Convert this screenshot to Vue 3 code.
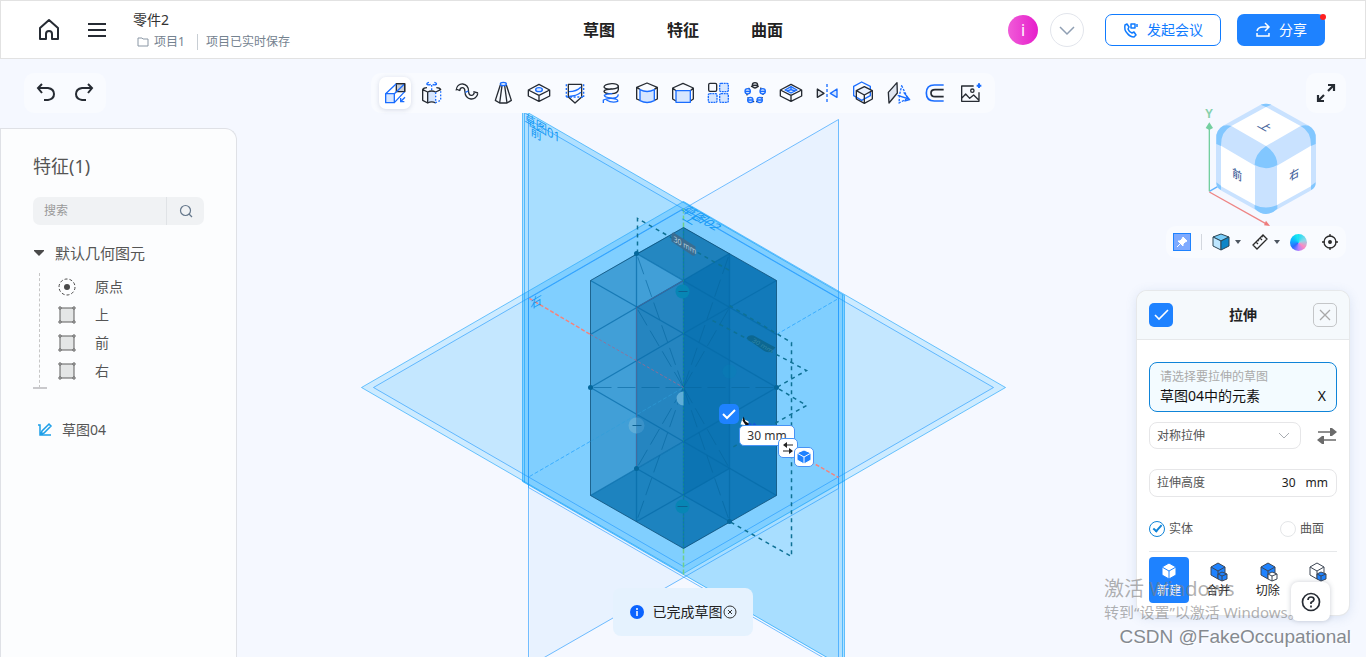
<script setup>
import { ref } from 'vue'

const tabs = ['草图', '特征', '曲面']

// toolbar glyphs, drawn on a 72x72 grid; .b = accent stroke, .f = accent fill
const tools = [
  { name: '拉伸', icon: '<path d="M40 8H65V32H40Z" fill="#c9ced6"/><path class="b f" d="M8 38H34V65H8Z"/><path class="b" d="M8 38L40 8M34 38L65 8M34 65L65 32"/><path d="M40 8H65V32"/><path class="b" d="M66 49L54 61M53 51V62H64"/>' },
  { name: '旋转', icon: '<path class="f n" d="M26 33Q38 27 50 33V66Q38 58 26 66Z"/><path d="M24 20Q14 20 11 26V58L26 66V33L11 26M52 20Q62 20 65 26L50 33Q38 27 26 33M26 66Q38 59 50 66"/><path class="b" stroke-dasharray="5 5" d="M50 34V65L65 58V28M38 12V28"/><path class="b" d="M30 4Q22 6 24 10Q30 13 35 10M46 4Q54 6 52 10Q46 13 41 10"/>' },
  { name: '扫描', icon: '<path stroke-width="15" d="M9 29C10 8 36 10 35 30C36 54 60 54 63 36"/><path stroke="#f9fbff" stroke-width="7" d="M8 31C10 8 36 10 35 30C36 54 60 54 64 34"/><path d="M3 24L15 29M55 32L69 36"/><path class="b" d="M31 34L40 30"/>' },
  { name: '放样', icon: '<path d="M28 12L13 58L26 66H48L61 58L46 12M33 14L26 66M41 14L48 66"/><path class="b f" d="M37 4Q46 4 46 9Q46 14 37 14Q28 14 28 9Q28 4 37 4Z"/>' },
  { name: '孔', icon: '<path d="M36 10L68 27L36 43L4 27ZM4 27V45L36 61L68 45V27M36 43V61"/><ellipse class="b f" cx="36" cy="26" rx="10" ry="6"/>' },
  { name: '螺纹', icon: '<path d="M16 10H56V48L36 66L16 48Z"/><path class="b" d="M18 32Q40 32 54 18M18 46Q40 46 54 34"/><path class="b" stroke-dasharray="6 5" d="M10 10V48M62 10V48M10 48H62"/>' },
  { name: '弹簧', icon: '<path d="M58 15Q54 7 38 8Q16 10 15 18Q18 26 40 24Q58 22 58 14V26Q56 38 38 38Q16 38 15 31Q18 24 38 24"/><path class="b" d="M58 40Q56 53 36 51Q16 49 16 43Q24 37 40 38M13 66V57Q30 49 50 54Q58 57 56 61Q40 67 22 57"/>' },
  { name: '圆角', icon: '<path class="f n" d="M15 26Q36 37 58 26V58Q36 70 15 58Z"/><path d="M15 58L5 54V19L36 6L67 19V54L58 58M5 19L15 25M67 19L58 25"/><path class="b" d="M15 26Q36 37 58 26V59Q36 70 15 59Z"/>' },
  { name: '倒角', icon: '<path d="M15 60L5 54V21L36 7L67 21V54L58 60M5 21L15 29M67 21L58 29"/><path class="b f" d="M15 29H58V64H15Z"/>' },
  { name: '线性阵列', icon: '<rect x="5" y="7" width="24" height="24" rx="4"/><g class="b f" stroke-dasharray="6 2"><rect x="38" y="7" width="26" height="25" rx="4"/><rect x="4" y="38" width="26" height="26" rx="4"/><rect x="38" y="38" width="26" height="26" rx="4"/></g>' },
  { name: '圆周阵列', icon: '<circle cx="36" cy="38" r="24" stroke-dasharray="4 6"/><circle cx="36" cy="13" r="8" fill="#dce0e6"/><g class="b f"><circle cx="14" cy="31" r="8"/><circle cx="59" cy="31" r="8"/><circle cx="22" cy="57" r="8"/><circle cx="50" cy="57" r="8"/></g><path d="M28 13H44"/><path class="b" d="M6 31H22M51 31H67M14 57H30M42 57H58"/>' },
  { name: '抽壳', icon: '<path d="M36 10L68 27L36 43L4 27ZM4 27V45L36 61L68 45V27M36 43V61"/><path class="b f" d="M36 17L54 27L36 36L18 27Z"/><path class="b" d="M36 17V26L24 30M36 26L48 30"/>' },
  { name: '镜像', icon: '<path d="M7 24V49L27 37Z" fill="#dce0e6"/><path class="b f" d="M66 24V49L46 37Z"/><path class="b" stroke-dasharray="9 6" d="M36 9V64"/>' },
  { name: '布尔', icon: '<path class="b" d="M32 3L58 16V44L32 58L8 44V16Z"/><path fill="#e9f1ff" d="M40 17L64 29L40 42L16 29Z"/><path d="M16 29V54L40 67L64 54V29M40 42V67"/>' },
  { name: '分割', icon: '<path fill="#e0e6f0" d="M30 5L4 34L6 66L31 36Z"/><path class="b" stroke-dasharray="7 4" d="M44 14L62 52L36 66L38 40Z"/><path class="b" d="M32 43L66 54M50 34L68 56L52 60"/>' },
  { name: '偏移', icon: '<path class="b" stroke-width="5" d="M62 12H34Q10 12 10 36Q10 60 34 60H62"/><path stroke-width="5" d="M62 26H36Q24 26 24 36Q24 47 36 47H62"/>' },
  { name: '贴图', icon: '<path d="M44 15H8V61H60V34M8 52L20 39L32 52L44 42L60 58"/><circle cx="40" cy="29" r="5"/><path class="b" stroke-width="6" d="M60 7V21M53 14H67"/>' },
]
const activeTool = ref('拉伸')

const planes = ['上', '前', '右']
const search = ref('')
const mode = ref('对称拉伸')
const height = ref('30')
const bodyType = ref('solid')

const operations = [
  { name: '新建', big: '#fff', small: '', active: true },
  { name: '合并', big: '#1e82ff', small: '#1e82ff' },
  { name: '切除', big: '#1e82ff', small: '#fff' },
  { name: '相交', big: '#fff', small: '#1e82ff' },
]

// edges of the extruded body
const edges = [
  'M590 280L683 333L776 280', 'M683 280L636 307', 'M636 253L776 334', 'M729 253L590 334',
  'M590 387L683 333L776 387L683 441L590 387', 'M590 495L683 441L776 495',
  'M636 468L729 521M729 468L636 521', 'M636 253V521M683 227V548M729 253V521',
]
const rays = [[636, 253], [636, 307], [729, 253], [729, 307], [590, 387], [776, 387], [636, 468], [636, 521], [729, 468], [729, 521]]
</script>

<template>
  <div class="app">
    <header class="topbar">
      <div class="top-left">
        <button class="icon-btn" aria-label="主页">
          <svg width="24" height="24" viewBox="0 0 24 24" fill="none" stroke="#262b33" stroke-width="2" stroke-linejoin="round"><path d="M3 10L12 2L21 10V21H15V16Q15 13 12 13Q9 13 9 16V21H3Z" /></svg>
        </button>
        <button class="icon-btn" aria-label="菜单">
          <svg width="24" height="24" viewBox="0 0 24 24" stroke="#262b33" stroke-width="2"><path d="M3 6H21M3 12H21M3 18H21" /></svg>
        </button>
        <div class="doc">
          <div class="doc-name">零件2</div>
          <div class="doc-sub">
            <svg width="12" height="12" viewBox="0 0 12 12" fill="none" stroke="#8a97a5"><path d="M1 10V2H5L6 3H11V10Z" /></svg>
            <span>项目1</span>
            <span class="saved">项目已实时保存</span>
          </div>
        </div>
      </div>
      <nav class="tabs">
        <a v-for="t in tabs" :key="t" href="#">{{ t }}</a>
      </nav>
      <div class="top-right">
        <span class="avatar">i</span>
        <button class="round" aria-label="更多">
          <svg width="18" height="18" viewBox="0 0 18 18" fill="none" stroke="#8f9fb3" stroke-width="1.5"><path d="M2 6L9 13L16 6" /></svg>
        </button>
        <button class="btn outline">
          <svg width="16" height="16" viewBox="0 0 16 16" fill="none" stroke="#0f7bff" stroke-width="1.5" stroke-linejoin="round"><path d="M2 3L4 2L6 5L5 7Q6 10 9 11L11 10L13 13L11 15Q7 15 4 11Q1 8 2 3Z" /><path d="M8 2H12V6H8ZM14 2V5" /></svg>
          发起会议
        </button>
        <button class="btn primary">
          <svg width="16" height="16" viewBox="0 0 16 16" fill="none" stroke="#fff" stroke-width="1.5"><path d="M2 11V14H14V11M2 9Q3 5 8 5H13M10 1L14 5L10 9" /></svg>
          分享
          <i class="dot"></i>
        </button>
      </div>
    </header>

    <main class="workspace">
      <div class="scene">
        <svg class="canvas" width="100%" height="100%">
          <svg x="50%" overflow="visible">
            <g transform="translate(-682.5 -58.5)" fill="none">
              <path fill="#e8f2ff" d="M838 119V488L529 666V298Z" />
              <path fill="#b0e0ff" d="M522 109L844 295V667L522 481Z" />
              <path fill="#a8deff" d="M529 119L838 298V664L529 485Z" />
              <path fill="#cdebff" d="M361 387L683 201L1005 387L683 573Z" />
              <path fill="#c4e7ff" d="M373 387L683 208L993 387L683 566Z" />
              <path fill="#80cfff" d="M522 294L683 201L844 295V481L683 573L522 481Z" />
              <g stroke="#1a96ff" stroke-opacity=".6">
                <path d="M838 119V488L528 666V298Z" />
                <path d="M528 119L838 298V666L528 487Z" />
                <path d="M373 387L683 208L993 387L683 566Z" />
              </g>
              <g stroke="#12a0fb" stroke-opacity=".6">
                <path d="M361 387L683 201L1005 387L683 573Z" />
                <path d="M522 109L844 295V667L522 481ZM524 110V482M842 294V666" />
              </g>
              <path stroke="#3aaeff" stroke-dasharray="4 2" d="M529 476L683 387M776 334L838 298" />
              <path stroke="#f4837d" stroke-width="1.5" stroke-dasharray="4 2" d="M529 298L590 334M810 461L838 477" />
              <path stroke="#6fd08c" stroke-width="1.5" stroke-dasharray="5 2" d="M683 208V227M683 548V576" />

              <g class="plane-label">
                <text transform="matrix(.866 .5 0 1 524 122)">草图01</text>
                <text transform="matrix(.866 .5 0 1 530 134)">前</text>
                <text transform="matrix(.866 .5 -.866 .5 679 210)">草图02</text>
                <text transform="matrix(.866 .5 -.866 .5 681 218)">上</text>
                <text transform="matrix(.866 -.5 0 1 530 309)">右</text>
              </g>

              <g class="body">
                <path fill="#419fd7" d="M590 280L636 253L683 280V441L590 495Z" />
                <path fill="#2487c1" d="M636 253L683 227V280Z" />
                <path fill="#2585c0" d="M636 307L683 280V441L636 468Z" />
                <path fill="#1d83bf" d="M590 495L683 441V548Z" />
                <path fill="#127aba" d="M683 227L776 280V495L683 548Z" />
                <path fill="#1d80bb" d="M683 227L729 253L683 280Z" />
                <path fill="#0c74b3" d="M683 280L729 253V468L683 495Z" />
                <path fill="#187fbd" d="M683 495L729 521L683 548Z" />
                <path v-for="e in edges" :key="e" :d="e" stroke="#066ba8" stroke-opacity=".7" stroke-width="1.3" />
                <path v-for="(r, i) in rays" :key="i" :d="`M683 387L${r[0]} ${r[1]}`" stroke="#05669f" stroke-opacity=".6" stroke-dasharray="18 6" />
                <path stroke="#0c4f78" stroke-opacity=".8" d="M683 227L776 280V495L683 548L590 495V280Z" />
                <path stroke="#a0698f" stroke-opacity=".8" stroke-dasharray="3 2" d="M590 334L683 387" />
                <path stroke="#68648f" stroke-opacity=".6" d="M683 280L636 307V468" />
                <path stroke="#138c8c" stroke-dasharray="2 2" d="M683 227V548" />
                <path stroke="#2f9edb" stroke-opacity=".6" stroke-dasharray="4 2" d="M590 441L683 387" />
                <path fill="#5fadd8" d="M636 417A8 8 0 0 0 636 433ZM683 391A7 7 0 0 0 683 405Z" />
                <path fill="#3991c8" d="M636 417A8 8 0 0 1 636 433Z" />
                <g fill="#0786b5"><circle cx="682" cy="291" r="7" /><circle cx="682" cy="506" r="7" /><circle cx="729" cy="371" r="7" fill-opacity=".3" /></g>
                <path stroke="#0d6192" d="M632 425H641M678 291H687M677 506H687" />
              </g>

              <g stroke="#0e7195" stroke-width="1.5" stroke-dasharray="4 4">
                <path d="M637 253V218L683 244L729 270" />
                <path d="M729 305L791 342V556L729 521" />
                <path d="M712 320L806 370L776 387L806 405L730 448" />
              </g>
              <g fill="#05679b"><circle cx="636" cy="253" r="2.5" /><circle cx="590" cy="387" r="2.5" /><circle cx="776" cy="387" r="2.5" /><circle cx="636" cy="468" r="2.5" /><circle cx="729" cy="521" r="2.5" /></g>
              <path fill="#3a6d91" d="M673 232Q671 232 671 235V241L692 255Q695 256 695 253V246Z" />
              <path fill="#0c6791" d="M746 338Q748 334 753 335L775 347L771 351Q767 353 763 350Z" />
              <g class="dim-label">
                <text transform="matrix(.866 .5 0 1 673 241)">30 mm</text>
                <text class="faint" transform="matrix(.866 .5 -.5 .7 751 341)">30 mm</text>
              </g>
              <path fill="#fff" d="M740 424L742 418L748 421V425Z" />
              <path fill="#111" d="M743 416L745 421L750 424V426H746L742 420Z" />
              <path stroke="#1457d8" stroke-width="2" d="M748 424H751M753 423L755 425" />
            </g>
          </svg>
        </svg>
        <button class="handle confirm" aria-label="确定">
          <svg width="20" height="20" viewBox="0 0 20 20" fill="none" stroke="#fff" stroke-width="2"><path d="M4 10L8 14L16 6" /></svg>
        </button>
        <span class="handle value">30 mm</span>
        <button class="handle flip" aria-label="反向">
          <svg width="16" height="16" viewBox="0 0 16 16" fill="#222" stroke="#222"><path d="M5 5H13M3 11H11" /><path stroke="none" d="M3 5L7 2V8ZM13 11L9 8V14Z" /></svg>
        </button>
        <button class="handle solid" aria-label="实体">
          <svg width="16" height="16" viewBox="0 0 16 16" fill="#1e82ff" stroke="#fff" stroke-width="1"><path d="M8 1L15 4V11L8 15L1 11V4Z" /><path d="M1 4L8 8L15 4M8 8V15" /></svg>
        </button>
      </div>

      <div class="col-left">
        <div class="pill history">
          <button class="icon-btn" aria-label="撤销">
            <svg width="22" height="22" viewBox="0 0 22 22" fill="none" stroke="#262b33" stroke-width="2"><path d="M7 2L3 6L7 11M3 6H13Q19 7 19 12Q19 17 13 18H9" /></svg>
          </button>
          <button class="icon-btn" aria-label="重做">
            <svg width="22" height="22" viewBox="0 0 22 22" fill="none" stroke="#262b33" stroke-width="2"><path d="M15 2L19 6L15 11M19 6H9Q3 7 3 12Q3 17 9 18H13" /></svg>
          </button>
        </div>
        <aside class="features">
          <h2>特征(1)</h2>
          <form class="search" @submit.prevent>
            <input v-model="search" type="text" placeholder="搜索" aria-label="搜索" />
            <button aria-label="查找">
              <svg width="14" height="14" viewBox="0 0 14 14" fill="none" stroke="#66788c" stroke-width="1.2"><circle cx="6.5" cy="6.5" r="5" /><path d="M10 10L13 13" /></svg>
            </button>
          </form>
          <div class="group">
            <svg width="12" height="8" viewBox="0 0 12 8" fill="#4a4a4a"><path d="M1 1H11V2L6 7L1 2Z" /></svg>
            默认几何图元
          </div>
          <ul class="tree">
            <li>
              <svg width="18" height="18" viewBox="0 0 18 18" fill="none" stroke="#4a4a4a"><circle cx="9" cy="9" r="8" stroke-dasharray="3 2" /><circle cx="9" cy="9" r="3" fill="#4a4a4a" stroke="none" /></svg>
              原点
            </li>
            <li v-for="p in planes" :key="p">
              <svg width="18" height="18" viewBox="0 0 18 18" fill="#e4e6e6" stroke="#5d5d5d"><path d="M2 2H16V16H2Z" /><circle cx="2" cy="2" r="1.2" /><circle cx="16" cy="2" r="1.2" /><circle cx="2" cy="16" r="1.2" /><circle cx="16" cy="16" r="1.2" /></svg>
              {{ p }}
            </li>
          </ul>
          <div class="sketch">
            <svg width="16" height="16" viewBox="0 0 16 16" fill="none" stroke="#1d9fe8" stroke-width="1.5"><path d="M1 3H3V13H14M4 12L5 9L12 2L14 4L7 11L4 12Z" /></svg>
            草图04
          </div>
        </aside>
      </div>

      <div class="col-center">
        <div class="pill tools">
          <button v-for="t in tools" :key="t.name" class="tool" :class="{ active: activeTool === t.name }" :aria-label="t.name" @click="activeTool = t.name">
            <svg class="glyph" width="24" height="24" viewBox="0 0 72 72" v-html="t.icon"></svg>
          </button>
        </div>
        <div class="toast" role="status">
          <svg width="14" height="14" viewBox="0 0 14 14"><circle cx="7" cy="7" r="7" fill="#0a63ff" /><path d="M7 6V11M7 3V5" stroke="#fff" stroke-width="1.5" /></svg>
          <span>已完成草图</span>
          <button class="icon-btn" aria-label="关闭提示">
            <svg width="14" height="14" viewBox="0 0 14 14" fill="none" stroke="#333"><circle cx="7" cy="7" r="6" /><path d="M5 5L9 9M9 5L5 9" /></svg>
          </button>
        </div>
      </div>

      <div class="col-right">
        <div class="view-nav">
          <svg class="cube" width="126" height="126" viewBox="180 30 378 378">
            <path d="M208 304L238 287" stroke="#5eb2ff" stroke-width="4" />
            <path fill="#c9e2ff" d="M362 44Q378 38 394 44L508 108Q528 120 528 145V275Q528 294 510 303L396 367Q378 377 360 367L246 303Q228 294 228 275V145Q228 120 248 108Z" />
            <path fill="#82c7ff" d="M362 44Q378 38 394 44L378 51ZM243 168Q242 125 274 108Q240 98 229 135V162ZM513 168Q514 125 482 108Q516 98 527 135V162ZM378 168Q344 192 344 225Q378 244 412 225Q412 192 378 168ZM344 345Q378 360 412 345V356Q378 388 344 356ZM229 277L243 287V300Q229 295 229 277ZM527 277L513 287V300Q527 295 527 277Z" />
            <path fill="#fff" d="M378 51L482 108L378 168L274 108ZM243 167L345 227V345L243 289ZM513 167L411 227V345L513 289Z" />
            <path d="M208 304V112" stroke="#74cfa0" stroke-width="4" />
            <path d="M197 114L208 97L219 114L208 120Z" fill="#74cfa0" />
            <path d="M208 306L376 400" stroke="#ee8585" stroke-width="4" />
            <path d="M372 406L378 392L390 408Z" fill="#ee7b7b" />
            <text class="axis" x="195" y="83">Y</text>
            <g class="face">
              <text transform="matrix(.866 .5 -.866 .5 350 108)">上</text>
              <text transform="matrix(.866 .5 0 1 277 258)">前</text>
              <text transform="matrix(.866 -.5 0 1 448 274)">右</text>
            </g>
          </svg>
          <button class="pill expand" aria-label="全屏">
            <svg width="20" height="20" viewBox="0 0 20 20" fill="none" stroke="#262b33" stroke-width="2.2"><path d="M12 2H18V8M18 2L12 8M8 18H2V12M2 18L8 12" /></svg>
          </button>
        </div>

        <div class="pill view-bar">
          <button class="pin" aria-label="固定">
            <svg width="12" height="12" viewBox="0 0 12 12" fill="#fff" stroke="#fff"><path d="M7 1L11 5L9 6L7 8V10L2 5H4L6 3ZM4 8L1 11" /></svg>
          </button>
          <i class="sep"></i>
          <button class="drop" aria-label="显示样式">
            <svg width="18" height="18" viewBox="0 0 18 18" stroke="#2c4656"><path fill="#79cdf9" d="M9 1L17 4L9 8L1 4Z" /><path fill="#bde6ff" d="M1 4L9 8V17L1 13Z" /><path fill="#0e86c8" d="M17 4L9 8V17L17 13Z" /></svg>
            <svg width="6" height="4" viewBox="0 0 6 4" fill="#4d5560"><path d="M0 0H6L3 4Z" /></svg>
          </button>
          <button class="drop" aria-label="测量">
            <svg width="18" height="18" viewBox="0 0 18 18" fill="none" stroke="#2b2b2b" stroke-width="1.3"><path d="M2 12L12 2L16 6L6 16ZM5 9L7 11M7 7L8 8M9 5L11 7M11 3L12 4" /></svg>
            <svg width="6" height="4" viewBox="0 0 6 4" fill="#4d5560"><path d="M0 0H6L3 4Z" /></svg>
          </button>
          <button class="wheel" aria-label="外观"></button>
          <button class="icon-btn locate" aria-label="定位">
            <svg width="16" height="16" viewBox="0 0 16 16" fill="none" stroke="#2b2b2b" stroke-width="1.3"><circle cx="8" cy="8" r="6" /><path d="M8 0V3M8 13V16M0 8H3M13 8H16" /><circle cx="8" cy="8" r="1.3" fill="#2b2b2b" /></svg>
          </button>
        </div>

        <section class="extrude">
          <header class="ex-head">
            <button class="sq ok" aria-label="确定">
              <svg width="16" height="16" viewBox="0 0 16 16" fill="none" stroke="#fff" stroke-width="1.6"><path d="M2 8L6 12L15 3" /></svg>
            </button>
            <h3>拉伸</h3>
            <button class="sq no" aria-label="取消">
              <svg width="14" height="14" viewBox="0 0 14 14" stroke="#a8a8a8" stroke-width="1.3"><path d="M2 2L12 12M12 2L2 12" /></svg>
            </button>
          </header>
          <div class="ex-body">
            <div class="pick">
              <div class="pick-hint">请选择要拉伸的草图</div>
              <div class="pick-row">草图04中的元素<button class="icon-btn" aria-label="清除">X</button></div>
            </div>
            <div class="mode-row">
              <div class="select">
                <select v-model="mode" aria-label="拉伸方式">
                  <option>对称拉伸</option>
                </select>
                <svg width="12" height="12" viewBox="0 0 12 12" fill="none" stroke="#a9adb2"><path d="M1 3L6 8L11 3" /></svg>
              </div>
              <button class="icon-btn" aria-label="反向">
                <svg width="20" height="18" viewBox="0 0 20 18" fill="#6b6b6b" stroke="#6b6b6b" stroke-width="1.3"><path d="M1 5H15M5 13H19" /><path stroke="none" d="M13 1H15L20 5L15 9H13ZM7 9H5L0 13L5 17H7Z" /></svg>
              </button>
            </div>
            <div class="field">
              <label for="ex-height">拉伸高度</label>
              <input id="ex-height" v-model="height" type="text" />
              <span>mm</span>
            </div>
            <div class="radios">
              <label><input v-model="bodyType" type="radio" value="solid" />实体</label>
              <label><input v-model="bodyType" type="radio" value="surface" />曲面</label>
            </div>
            <div class="ops">
              <button v-for="o in operations" :key="o.name" class="op" :class="{ on: o.active }">
                <svg width="20" height="20" viewBox="0 0 20 20" stroke-linejoin="round">
                  <g :fill="o.big" :stroke="o.active ? '#1e82ff' : '#3d4654'">
                    <path d="M10 1L17 5V13L10 17L3 13V5Z" /><path d="M3 5L10 9L17 5M10 9V17" />
                  </g>
                  <g v-if="o.small" :fill="o.small" stroke="#3d4654">
                    <path d="M14 10L19 12V17L14 19L10 17V12Z" /><path d="M10 12L14 14L19 12M14 14V19" />
                  </g>
                </svg>
                {{ o.name }}
              </button>
            </div>
          </div>
        </section>
      </div>

      <button class="help" aria-label="帮助">
        <svg width="20" height="20" viewBox="0 0 20 20" fill="none" stroke="#262b33" stroke-width="1.7"><circle cx="10" cy="10" r="8.5" /><path d="M7 8Q7 5 10 5Q13 5 13 7.5Q13 9 10 10.5V12M10 13.5V15.5" /></svg>
      </button>
      <div class="activate">
        <p class="line-1">激活 Windows</p>
        <p class="line-2">转到“设置”以激活 Windows。</p>
      </div>
      <div class="credit">CSDN @FakeOccupational</div>
    </main>
  </div>
</template>

<style>
body {
  margin: 0;
  background: #f5f8ff;
}
</style>

<style scoped>
.app {
  display: flex;
  flex-direction: column;
  height: 100vh;
  min-height: 640px;
  overflow: hidden;
  background: #f5f8ff;
  color: #333;
  font-family: "Noto Sans", "Noto Sans CJK SC", sans-serif;
  font-size: 14px;
  line-height: 20px;
}
.app *, .app *::before { box-sizing: border-box; }
button {
  padding: 0;
  border: 0;
  background: none;
  color: inherit;
  font: inherit;
  cursor: pointer;
}
svg { display: block; flex: none; }
h2, h3, p, ul { margin: 0; padding: 0; font-weight: 400; }
.icon-btn { display: flex; align-items: center; }

/* top bar */
.topbar {
  display: grid;
  grid-template-columns: 1fr auto 1fr;
  align-items: center;
  height: 59px;
  flex: none;
  background: #fff;
  border: 1px solid #e2e2e2;
}
.top-left { display: flex; align-items: center; gap: 24px; padding-left: 36px; }
.doc { padding-top: 2px; }
.doc-name { color: #333; }
.doc-sub { display: flex; align-items: center; gap: 5px; padding-left: 4px; margin-top: 2px; font-size: 12px; color: #74828f; }
.saved { border-left: 1px solid #c8ced4; margin-left: 7px; padding-left: 8px; line-height: 16px; }
.tabs { display: flex; gap: 52px; }
.tabs a { color: #222; font-size: 16px; font-weight: 600; text-decoration: none; }
.top-right { display: flex; align-items: center; justify-content: flex-end; padding-right: 40px; }
.avatar {
  width: 30px;
  height: 30px;
  margin-right: 12px;
  border-radius: 50%;
  background: linear-gradient(90deg, #f05bd8, #e61ecb);
  color: #fff;
  text-align: center;
  font-size: 16px;
  line-height: 30px;
}
.round {
  display: flex;
  align-items: center;
  justify-content: center;
  width: 34px;
  height: 34px;
  margin-right: 21px;
  border: 1px solid #e2e5ec;
  border-radius: 50%;
}
.btn { position: relative; display: flex; align-items: center; justify-content: center; gap: 8px; height: 32px; border-radius: 7px; }
.outline { width: 116px; margin-right: 16px; border: 1px solid #0f7bff; color: #0f7bff; }
.primary { width: 88px; background: #1e82ff; color: #fff; }
.dot { position: absolute; top: 0; right: -1px; width: 6px; height: 6px; border-radius: 50%; background: #ff2020; }

/* workspace */
.workspace {
  position: relative;
  display: grid;
  grid-template-columns: 237px 1fr 237px;
  flex: 1;
  min-height: 0;
}
.scene { position: absolute; inset: 0; overflow: hidden; }
.col-left, .col-center, .col-right { position: relative; display: flex; flex-direction: column; padding-top: 14px; }
.pill { background: #f9fbff; border-radius: 10px; }
.plane-label { fill: #1499f5; font-size: 13px; }
.dim-label { fill: #b8cfdd; font-size: 8px; }
.dim-label .faint { fill: #3289a8; font-size: 7px; }
.handle { position: absolute; display: flex; align-items: center; justify-content: center; }
.confirm { left: calc(50% + 36px); top: 345px; width: 20px; height: 20px; border-radius: 5px; background: #1e82ff; }
.value, .flip, .solid { border: 1px solid #4793f5; border-radius: 5px; background: #fff; }
.value { left: calc(50% + 56px); top: 366px; width: 56px; height: 21px; color: #333; font-size: 12px; }
.flip { left: calc(50% + 95px); top: 379px; width: 20px; height: 20px; }
.solid { left: calc(50% + 111px); top: 388px; width: 20px; height: 20px; }

/* left */
.history { display: flex; align-items: center; justify-content: space-between; width: 82px; height: 40px; margin-left: 24px; padding: 0 11px; }
.features {
  flex: 1;
  margin-top: 15px;
  padding: 25px 32px 0;
  border: 1px solid #dfe1e6;
  border-width: 1px 1px 0 1px;
  border-radius: 0 12px 0 0;
  background: #fcfdfe;
  color: #555;
}
h2 { font-size: 18px; line-height: 24px; color: #555; }
.search { display: flex; height: 28px; margin-top: 19px; border-radius: 7px; background: #f0f2f4; overflow: hidden; }
.search input { flex: 1; min-width: 0; padding: 0 11px; border: 0; background: none; font: inherit; font-size: 12px; outline: none; }
.search input::placeholder { color: #999; }
.search button { display: flex; align-items: center; justify-content: center; width: 38px; border-left: 1px solid #e0e3e6; }
.group { display: flex; align-items: center; gap: 10px; margin-top: 18px; font-size: 15px; }
.tree { position: relative; margin: 10px 0 0 6px; padding-bottom: 3px; border-left: 1px dashed #c6c6c6; list-style: none; }
.tree::after { content: ''; position: absolute; left: -7px; bottom: -1px; width: 14px; height: 2px; background: #c9c9cc; }
.tree li { display: flex; align-items: center; gap: 19px; height: 28px; padding-left: 18px; }
.sketch { display: flex; align-items: center; gap: 9px; margin-top: 32px; padding-left: 4px; }

/* center */
.col-center { align-items: center; justify-content: space-between; padding-bottom: 21px; }
.tools { display: flex; align-items: center; gap: 4px; height: 40px; padding: 0 8px; }
.tool { display: flex; align-items: center; justify-content: center; width: 32px; height: 32px; border-radius: 7px; }
.tool.active { background: #fff; box-shadow: 0 1px 5px rgba(60, 80, 120, .18); }
.glyph { fill: none; stroke: #262b33; stroke-width: 4; stroke-linejoin: round; }
.glyph :deep(.b) { stroke: #1a6dff; }
.glyph :deep(.f) { fill: #d6e6ff; }
.glyph :deep(.n) { stroke: none; }
.toast { display: flex; align-items: center; justify-content: center; width: 140px; height: 48px; border-radius: 8px; background: #e5f2fe; color: #222; }
.toast span { margin-left: 9px; }

/* right */
.col-right { align-items: flex-end; padding-right: 20px; }
.view-nav { display: grid; justify-items: end; }
.view-nav > * { grid-area: 1 / 1; }
.cube { margin: 27px 20px 0 0; }
.expand { display: flex; align-items: center; justify-content: center; width: 40px; height: 40px; }
.axis { fill: #86d0ac; font-family: "Liberation Sans", sans-serif; font-size: 36px; font-weight: 700; }
.face { fill: #48659c; font-size: 34px; font-weight: 500; }
.view-bar { position: relative; display: flex; align-items: center; gap: 10px; width: 180px; height: 32px; padding: 0 8px 0 7px; }
.locate { margin-left: auto; }
.pin { display: flex; align-items: center; justify-content: center; width: 18px; height: 18px; border: 1px solid #1e82ff; background: #7eaaff; }
.sep { width: 1px; height: 16px; background: #d3d7de; }
.drop { display: flex; align-items: center; gap: 5px; }
.wheel { width: 17px; height: 17px; border-radius: 50%; background: conic-gradient(#19e0f5, #8fd8e8 70deg, #ff8ac0 130deg, #b07dff 180deg, #2a6bff 230deg, #0bb5ff 290deg, #19f0ec); }
.extrude {
  width: 212px;
  height: 324px;
  margin: 33px -3px 0 0;
  border-radius: 10px;
  background: #fff;
  box-shadow: 0 0 0 1px #e6e8ea, 0 2px 12px rgba(70, 110, 180, .18);
  color: #555;
  font-size: 12px;
}
.ex-head {
  display: flex;
  align-items: center;
  justify-content: space-between;
  height: 49px;
  padding: 0 12px;
  border-bottom: 1px solid #e6e8ea;
  border-radius: 10px 10px 0 0;
  background: #f5f9fc;
}
h3 { color: #222; font-size: 14px; font-weight: 600; }
.sq { display: flex; align-items: center; justify-content: center; width: 24px; height: 24px; border-radius: 5px; }
.ok { background: #1e82ff; }
.no { border: 1px solid #c4c6c8; }
.ex-body { padding: 22px 12px 0; }
.pick { height: 50px; padding: 4px 10px; border: 1px solid #0f84d8; border-radius: 8px; background: #f3fbff; }
.pick-hint { color: #aaa; }
.pick-row { display: flex; justify-content: space-between; color: #111; font-size: 14px; line-height: 18px; }
.mode-row { display: flex; align-items: center; justify-content: space-between; margin-top: 10px; }
.select { display: flex; align-items: center; width: 152px; height: 27px; padding-right: 10px; border: 1px solid #e6e6e8; border-radius: 8px; }
.select select { flex: 1; height: 25px; padding: 0 7px; border: 0; background: none; color: #555; font: inherit; appearance: none; outline: none; }
.field { display: flex; align-items: center; height: 28px; margin-top: 20px; padding: 0 8px 0 7px; border: 1px solid #e6e6e8; border-radius: 8px; }
.field input { flex: 1; min-width: 0; padding: 0 10px; border: 0; background: none; color: #222; font: inherit; text-align: right; outline: none; }
.field span { color: #222; }
.radios { display: flex; justify-content: space-between; margin-top: 22px; padding-right: 13px; padding-bottom: 12px; }
.radios label { display: flex; align-items: center; gap: 4px; }
.radios input { width: 16px; height: 16px; margin: 0; border: 1px solid #e4e6e8; border-radius: 50%; appearance: none; }
.radios input:checked { border-color: #0f84d8; }
.radios input:checked::before { content: ''; display: block; width: 9px; height: 5px; margin: 3px 0 0 3px; border: solid #0f84d8; border-width: 0 0 2px 2px; transform: rotate(-48deg); }
.ops { display: flex; justify-content: space-between; padding-top: 5px; border-top: 1px solid #e6e8ea; }
.op { display: flex; flex-direction: column; align-items: center; width: 40px; height: 46px; padding-top: 5px; border-radius: 4px; color: #222; line-height: 18px; }
.op.on { background: #1e82ff; color: #fff; }

.help {
  position: absolute;
  right: 36px;
  bottom: 36px;
  display: flex;
  align-items: center;
  justify-content: center;
  width: 39px;
  height: 39px;
  border-radius: 7px;
  background: #fff;
  box-shadow: 0 0 5px rgba(80, 90, 110, .3);
}
.activate { position: absolute; left: calc(100% - 262px); bottom: 34px; color: rgba(125, 125, 125, .6); white-space: nowrap; pointer-events: none; }
.line-1 { font-size: 20px; line-height: 24px; }
.line-2 { font-size: 15px; line-height: 22px; }
.credit {
  position: absolute;
  right: 15px;
  bottom: 8px;
  color: #858a90;
  font-family: "Liberation Sans", sans-serif;
  font-size: 19px;
  line-height: 24px;
  text-shadow: 1px 1px 0 #fff;
  pointer-events: none;
}
</style>
